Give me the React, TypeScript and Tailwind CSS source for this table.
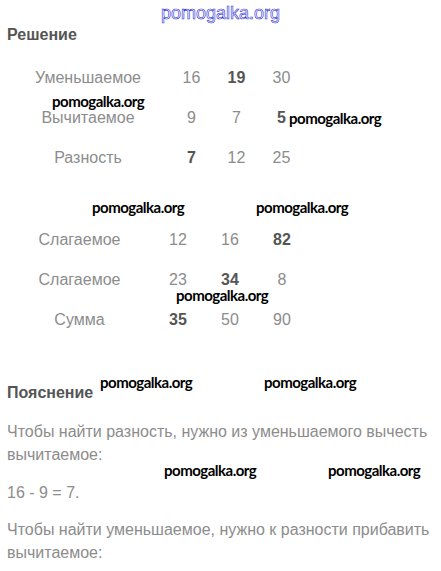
const marks = [
  { x: 52, y: 92 },
  { x: 289, y: 109 },
  { x: 92, y: 198 },
  { x: 256, y: 198 },
  { x: 176, y: 286 },
  { x: 100, y: 373 },
  { x: 264, y: 373 },
  { x: 164, y: 461 },
  { x: 328, y: 461 },
];

const diffRows = [
  { label: 'Уменьшаемое', values: ['16', '19', '30'], bold: 1 },
  { label: 'Вычитаемое', values: ['9', '7', '5'], bold: 2 },
  { label: 'Разность', values: ['7', '12', '25'], bold: 0 },
];

const sumRows = [
  { label: 'Слагаемое', values: ['12', '16', '82'], bold: 2 },
  { label: 'Слагаемое', values: ['23', '34', '8'], bold: 1 },
  { label: 'Сумма', values: ['35', '50', '90'], bold: 0 },
];

function Cell({ value, bold, w }: { value: string; bold: boolean; w: string }) {
  return (
    <div className={`${w} text-center ${bold ? 'font-bold text-[#555]' : ''}`}>{value}</div>
  );
}

export default function App() {
  return (
    <div className="relative w-[441px] h-[571px] overflow-hidden bg-white font-['Liberation_Sans',Arial,sans-serif] text-[#8c8c8c]">
      <div className="h-[25px] flex items-center justify-center">
        <span className="text-[18px] leading-none text-white [-webkit-text-stroke:0.6px_#2a2ad0]">
          pomogalka.org
        </span>
      </div>

      <h2 className="pl-[7px] text-[16px] leading-[20px] font-bold text-[#555]">Решение</h2>

      <div className="mt-[13px] pl-[7px] text-[16px]">
        {diffRows.map((r, i) => (
          <div key={i} className="h-[40px] flex items-center">
            <div className="w-[162px] text-center">{r.label}</div>
            {r.values.map((v, j) => (
              <Cell key={j} value={v} bold={j === r.bold} w="w-[45px]" />
            ))}
          </div>
        ))}
      </div>

      <div className="mt-[42px] pl-[7px] text-[16px]">
        {sumRows.map((r, i) => (
          <div key={i} className="h-[40px] flex items-center">
            <div className="w-[145px] text-center">{r.label}</div>
            {r.values.map((v, j) => (
              <Cell key={j} value={v} bold={j === r.bold} w="w-[52px]" />
            ))}
          </div>
        ))}
      </div>

      <h2 className="mt-[43px] pl-[7px] text-[16px] leading-[20px] font-bold text-[#555]">Пояснение</h2>

      <div className="mt-[17px] px-[7px] text-[16px] leading-[23px]">
        <p>Чтобы найти разность, нужно из уменьшаемого вычесть вычитаемое:</p>
        <p className="mt-[15px]">16 - 9 = 7.</p>
        <p className="mt-[14px]">Чтобы найти уменьшаемое, нужно к разности прибавить вычитаемое:</p>
      </div>

      {marks.map((m, i) => (
        <span
          key={i}
          className="absolute font-['Lato',sans-serif] font-bold text-[15px] leading-[18px] tracking-[-0.5px] text-black"
          style={{ left: m.x, top: m.y }}
        >
          pomogalka.org
        </span>
      ))}
    </div>
  );
}
